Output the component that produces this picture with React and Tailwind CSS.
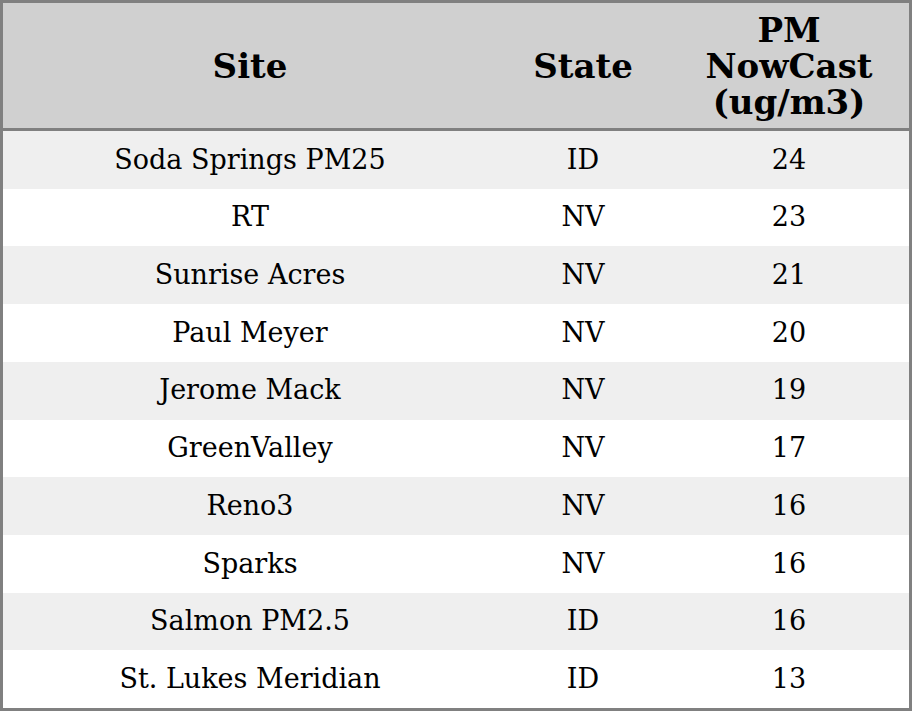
import React from "react";

const rows = [
  ["Soda Springs PM25", "ID", "24"],
  ["RT", "NV", "23"],
  ["Sunrise Acres", "NV", "21"],
  ["Paul Meyer", "NV", "20"],
  ["Jerome Mack", "NV", "19"],
  ["GreenValley", "NV", "17"],
  ["Reno3", "NV", "16"],
  ["Sparks", "NV", "16"],
  ["Salmon PM2.5", "ID", "16"],
  ["St. Lukes Meridian", "ID", "13"],
];

export default function App() {
  return (
    <div className="w-[912px] h-[711px] bg-white font-['DejaVu_Serif',serif] text-black">
      <div className="w-[912px] h-[711px] border-[3px] border-[#808080] flex flex-col">
        <div className="h-[128px] shrink-0 bg-[#d0d0d0] border-b-[3px] border-[#808080] grid grid-cols-[494px_172px_240px] items-center text-center font-bold text-[34px] leading-[36px]">
          <div>Site</div>
          <div>State</div>
          <div>PM<br />NowCast<br />(ug/m3)</div>
        </div>
        <div className="flex-1 flex flex-col">
          {rows.map((r, i) => (
            <div
              key={i}
              className={`flex-1 grid grid-cols-[494px_172px_240px] items-center text-center text-[27px] ${i % 2 === 0 ? "bg-[#efefef]" : "bg-white"}`}
            >
              <div>{r[0]}</div>
              <div>{r[1]}</div>
              <div>{r[2]}</div>
            </div>
          ))}
        </div>
      </div>
    </div>
  );
}
